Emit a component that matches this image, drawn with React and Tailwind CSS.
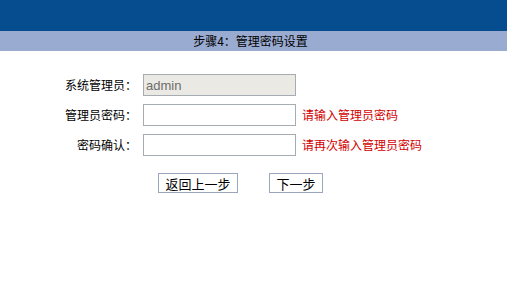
import React from 'react'

const font = { fontFamily: '"Noto Sans CJK SC", "Liberation Sans", sans-serif' }

function Field({ label, value, disabled, hint }) {
  return (
    <>
      <div className="flex h-[22px] items-center justify-end text-[12px] text-black">{label}</div>
      <div className="flex items-center">
        <input
          className={`h-[22px] w-[153px] border border-[#a5acb2] px-[2px] text-[13px] outline-none ${disabled ? 'bg-[#ebe9e3] text-[#6d6d6d]' : 'bg-white'}`}
          style={{ fontFamily: '"Liberation Sans", sans-serif' }}
          defaultValue={value}
          disabled={disabled}
          type={disabled ? 'text' : 'password'}
        />
        {hint ? <span className="ml-[6px] text-[12px] text-[#d30000]">{hint}</span> : null}
      </div>
    </>
  )
}

export default function App() {
  return (
    <div className="h-[285px] w-[507px] bg-white" style={font}>
      <div className="h-[31px] bg-[#064d8f]" />
      <div className="flex h-[20px] items-center justify-center bg-[#9aabd2] pr-[6px] text-[12px] text-black">
        步骤4：管理密码设置
      </div>

      <div className="grid grid-cols-[72px_auto] gap-x-[6px] gap-y-[8px] pl-[65px] pt-[23px]">
        <Field label="系统管理员：" value="admin" disabled />
        <Field label="管理员密码：" hint="请输入管理员密码" />
        <Field label="密码确认：" hint="请再次输入管理员密码" />
      </div>

      <div className="mt-[17px] flex gap-[31px] pl-[158px]">
        <button className="h-[20px] w-[80px] border border-[#9aa4bd] bg-white text-[13px] leading-none text-black">
          返回上一步
        </button>
        <button className="h-[20px] w-[54px] border border-[#9aa4bd] bg-white text-[13px] leading-none text-black">
          下一步
        </button>
      </div>
    </div>
  )
}
